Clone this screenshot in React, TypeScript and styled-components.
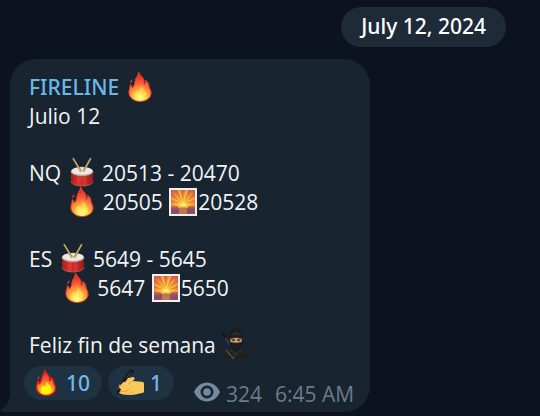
import React, { useId } from "react";
import styled, { createGlobalStyle } from "styled-components";

const GlobalStyle = createGlobalStyle`
  * { box-sizing: border-box; }
  body {
    margin: 0;
    background: #0d131e;
    color: #f2f4f6;
    font-family: "Open Sans", "Noto Sans", sans-serif;
    font-size: 21px;
    line-height: 29px;
  }
`;

const Chat = styled.main`
  display: flex;
  flex-direction: column;
  gap: 12px;
  padding: 7px 0 3px;
`;

const DateRow = styled.div`
  display: flex;
  justify-content: flex-end;
  padding-right: 34px;
`;

const DatePill = styled.time`
  padding: 5px 20px 6px;
  border-radius: 20px;
  background: #1e2a38;
  color: #fff;
  font-family: "Noto Sans", "Open Sans", sans-serif;
  font-size: 21px;
  font-weight: 500;
`;

const Bubble = styled.article`
  position: relative;
  width: fit-content;
  margin-left: 10px;
  padding: 14px 16px 4px 14px;
  border-radius: 26px 26px 26px 0;
  background: #18242f;
`;

const Tail = styled.svg`
  position: absolute;
  left: -10px;
  bottom: 0;
  width: 10px;
  height: 20px;
`;

const Body = styled.div`
  display: flex;
  flex-direction: column;
  gap: 28px;
  padding-left: 5px;
`;

const Line = styled.p`
  margin: 0;
  height: 29px;
  white-space: pre;
`;

const Sender = styled.h2`
  margin: 0;
  height: 29px;
  color: #6ab8ea;
  font-family: "Noto Sans", "Open Sans", sans-serif;
  font-size: 21px;
  font-weight: 500;
  white-space: pre;
`;

const Glyph = styled.svg<{ $size?: number }>`
  width: ${(p) => p.$size ?? 28}px;
  height: ${(p) => p.$size ?? 28}px;
  margin: 0 1px;
  vertical-align: -6px;
  overflow: visible;
`;

const Footer = styled.footer`
  display: flex;
  align-items: flex-start;
  gap: 20px;
  margin-top: 6px;
`;

const Reactions = styled.div`
  display: flex;
  gap: 6px;
`;

const Reaction = styled.button`
  display: flex;
  align-items: center;
  gap: 6px;
  height: 34px;
  padding: 0 12px 0 8px;
  border: 0;
  border-radius: 17px;
  background: #1e3241;
  color: #72b7ec;
  font: 500 21px/29px "Noto Sans", "Open Sans", sans-serif;
  cursor: pointer;
`;

const ReactionIcon = styled.span`
  display: flex;
  justify-content: center;
  width: 28px;
`;

const Meta = styled.div`
  display: flex;
  align-items: center;
  gap: 13px;
  padding-top: 14px;
  color: #6c7b89;
  line-height: 28px;
`;

const Views = styled.span`
  display: flex;
  align-items: center;
  gap: 6px;
`;

const EyeIcon = styled.svg`
  width: 26px;
  height: 20px;
  margin-bottom: 4px;
`;

function Fire({ size, vivid }: { size?: number; vivid?: boolean }) {
  const id = useId();
  return (
    <Glyph $size={size} viewBox="0 0 28 28" role="img" aria-label="fire">
      <defs>
        <radialGradient id={id} gradientUnits="userSpaceOnUse" cx="14" cy="25" r="21">
          <stop offset="0" stopColor={vivid ? "#ffff18" : "#fffdb0"} />
          <stop offset="0.2" stopColor={vivid ? "#fff000" : "#ffe94a"} />
          <stop offset="0.42" stopColor={vivid ? "#ff9e1c" : "#fda636"} />
          <stop offset="0.7" stopColor="#f5623a" />
          <stop offset="1" stopColor="#e9362c" />
        </radialGradient>
      </defs>
      <path
        d="M12.6-1c.6 3 4.600 4.700 5.400 8.400.4 1.600.2 2.900.1 4 1.300-.8 1.700-2.200 1.600-4 3 1.700 3.100 4.300 3.400 6.200.3 1.800 2 3.400 2 6.400 0 4.900-4.900 8.500-11 8.500S2.900 24.600 2.900 19.600c0-3 1.200-5 1.500-8.200 1 .8 1.800 2 2.100 3.500C9 12.200 8.500 9.200 9.600 6.200 10.300 3.900 12.500 2.200 12.600-1z"
        fill={`url(#${id})`}
        stroke={vivid ? "#d51a13" : "#e03a2a"}
        strokeWidth={vivid ? 1.6 : 1}
        strokeLinejoin="round"
      />
      <path d="M6.300 6.200C4.600 7.200 3.900 8.500 4.400 10.300 5.900 9.300 6.500 8 6.300 6.200z" fill="#df3428" />
      <path
        d="M14.500 12c2 3.300 5.800 6 5.800 10 0 3.200-2.700 5.100-6.200 5.100S8 25 8 22c0-2.400 1.500-3.700 2.500-5.600l1.500 2.700c1.800-1.800 3-4.200 2.500-7.100z"
        fill={vivid ? "#fff310" : "#fff180"}
        opacity={vivid ? 1 : 0.35}
      />
    </Glyph>
  );
}

function Drum() {
  const id = useId();
  return (
    <Glyph viewBox="0 0 28 28" role="img" aria-label="drum">
      <defs>
        <linearGradient id={id}>
          <stop offset="0" stopColor="#9e1b1c" />
          <stop offset="0.3" stopColor="#e5332d" />
          <stop offset="0.65" stopColor="#d6322c" />
          <stop offset="1" stopColor="#8e1618" />
        </linearGradient>
      </defs>
      <path d="M3 12v10.500c0 2.800 5 4.800 11 4.800s11-2 11-4.800V12z" fill={`url(#${id})`} />
      <path d="M3 22.300c0 2.600 5 4.600 11 4.600s11-2 11-4.600" fill="none" stroke="#a06660" strokeWidth="0.8" />
      <path d="M8 15.500v10M14 16v11M20 15.500v10" stroke="#7d3031" strokeWidth="0.6" />
      <ellipse cx="14" cy="12.500" rx="11.300" ry="4.700" fill="#b3aaa7" />
      <ellipse cx="14" cy="12" rx="10.400" ry="3.800" fill="#ede9e4" />
      <path d="M5.300-.3 12.500 11.600M22.500-.3 15.800 11.600" stroke="#75603c" strokeWidth="2" strokeLinecap="round" />
      <path d="M5.300-.3 12.500 11.600M22.500-.3 15.800 11.600" stroke="#d3b477" strokeWidth="1.200" strokeLinecap="round" />
      <circle cx="12.500" cy="11.500" r="1.200" fill="#d2a64f" />
      <circle cx="15.800" cy="11.500" r="1.200" fill="#d2a64f" />
    </Glyph>
  );
}

function Sunrise() {
  const id = useId();
  return (
    <Glyph viewBox="0 0 28 28" role="img" aria-label="sunrise">
      <defs>
        <radialGradient id={id} gradientUnits="userSpaceOnUse" cx="14" cy="16" r="18">
          <stop offset="0" stopColor="#fff66e" />
          <stop offset="0.25" stopColor="#ffc936" />
          <stop offset="0.65" stopColor="#f18b39" />
          <stop offset="1" stopColor="#bd5950" />
        </radialGradient>
      </defs>
      <rect width="28" height="28" fill="#f2f1f1" />
      <rect x="2" y="2" width="24" height="24" fill={`url(#${id})`} />
      <path
        d="M14 16 5 2h3zM14 16 12 2h3zM14 16 20 2h3zM14 16 2 5v3zM14 16 26 5v3zM14 16 2 12v2zM14 16 26 12v2z"
        fill="#c94e45"
        opacity="0.45"
      />
      <path d="M14 16 9 2h2zM14 16 17 2h2zM14 16 2 9.500v1zM14 16 26 9.500v1z" fill="#ffe05a" opacity="0.5" />
      <path d="M2 18.500h24V26H2z" fill="#8a5068" />
      <path d="M2 18.500h24v2H2z" fill="#b66055" />
      <path d="M10 18.500h8V26h-8z" fill="#c0764e" />
      <path d="M11 18a3 3 0 0 1 6 0z" fill="#fff46b" />
      <path d="M9 18h10v1.500H9z" fill="#ffc64d" />
    </Glyph>
  );
}

function Ninja() {
  return (
    <Glyph viewBox="0 0 28 28" role="img" aria-label="ninja">
      <path d="M1 3.500 8 14" stroke="#3a3d42" strokeWidth="1.500" />
      <path d="m.5 2.500 3 4.500" stroke="#15171a" strokeWidth="2.600" />
      <path d="M.5 28c0-6 3.500-8 8.800-9.500h9.400c5.300 1.500 8.800 3.500 8.800 9.500z" fill="#202021" />
      <path d="M7 8.500C7-.500 10-2 14-2s7 1.500 7 10.500c0 6.500-3 11.500-7 11.500S7 15 7 8.500z" fill="#1c1c1d" />
      <path d="M9 5C10 0 17-1.500 19.500 5L14 4z" fill="#2b2b2c" />
      <path d="M8.300 7.300c3-.9 8.400-.9 11.400 0v3.800c-3 1-8.400 1-11.400 0z" fill="#c39970" />
      <path d="m9 7.700 3.500.9M19 7.700l-3.700.9" stroke="#382c25" />
      <ellipse cx="11.500" cy="9.500" rx="1.100" ry=".8" fill="#251e1b" />
      <ellipse cx="16.800" cy="9.500" rx="1.100" ry=".8" fill="#251e1b" />
      <path d="m8 18.500 6 4.500 6-4.500M14 23l-3 4" stroke="#37373a" fill="none" />
      <path d="m4 19 8 9" stroke="#4e4e50" strokeWidth="1.300" />
    </Glyph>
  );
}

function WritingHand() {
  return (
    <Glyph viewBox="0 0 28 28" role="img" aria-label="writing hand">
      <path
        d="M2.500 19C3.500 14.500 6 11.500 9.500 9.800L17 8c1.400 0 2 1.400 1.200 2.500L16.500 12l9.500.8c1.200.2 2 1 2 2v7.500c0 1-.7 1.600-1.700 1.700-4 .5-8 2.300-13 2C7.500 26 3.500 25 2 22.500z"
        fill="#fbc85c"
      />
      <path d="M3.500 22.500c4 1 7.500-.8 10.500-2.500M9 25c3 .4 5.500-.7 8-2.500M16.500 12.300 12.500 15" stroke="#dd9840" strokeWidth="0.8" fill="none" />
      <path d="M.5 26.500 1 22l4-6 2 1.500L3.500 23z" fill="#16191d" />
      <path d="M5 16 14.500 2.800" stroke="#16191d" strokeWidth="3.200" />
      <path d="m13.500 2 1-1.200c1.500-1 4 .8 3.200 2.400l-1.400 1.800z" fill="#16191d" />
      <path d="M14.500 3.500 10 9.800" stroke="#50575d" strokeWidth="0.8" />
      <path d="M3.500 19.500C4 17 5.500 14.500 7.500 13c1.300-.7 2.600.7 1.700 2L5.500 20.500z" fill="#fbc85c" />
    </Glyph>
  );
}

export default function App() {
  return (
    <>
      <GlobalStyle />
      <Chat>
        <DateRow>
          <DatePill dateTime="2024-07-12">July 12, 2024</DatePill>
        </DateRow>
        <Bubble>
          <Tail viewBox="0 0 10 20" aria-hidden="true">
            <path d="M10 0v20H2c-2 0-2-1.500-.5-2.500C7 14 10 8 10 0z" fill="#18242f" />
          </Tail>
          <Body>
            <div>
              <Sender>FIRELINE <Fire /></Sender>
              <Line>Julio 12</Line>
            </div>
            <div>
              <Line>NQ <Drum /> 20513 - 20470</Line>
              <Line>{"       "}<Fire /> 20505 <Sunrise />20528</Line>
            </div>
            <div>
              <Line>ES <Drum /> 5649 - 5645</Line>
              <Line>{"      "}<Fire /> 5647 <Sunrise />5650</Line>
            </div>
            <Line>Feliz fin de semana <Ninja /></Line>
          </Body>
          <Footer>
            <Reactions>
              <Reaction type="button"><ReactionIcon><Fire size={24} vivid /></ReactionIcon>10</Reaction>
              <Reaction type="button"><ReactionIcon><WritingHand /></ReactionIcon>1</Reaction>
            </Reactions>
            <Meta>
              <Views>
                <EyeIcon viewBox="0 0 26 20" role="img" aria-label="views">
                  <path
                    fillRule="evenodd"
                    d="M13 .5C7.300.5 2.500 4.200 0 10c2.500 5.800 7.300 9.500 13 9.500S23.500 15.800 26 10C23.500 4.200 18.700.5 13 .5zm0 3a6.500 6.500 0 1 1 0 13 6.500 6.500 0 0 1 0-13z"
                    fill="#7589a0"
                  />
                  <circle cx="13" cy="10" r="3.800" fill="#7589a0" />
                </EyeIcon>
                324
              </Views>
              <time>6:45 AM</time>
            </Meta>
          </Footer>
        </Bubble>
      </Chat>
    </>
  );
}
